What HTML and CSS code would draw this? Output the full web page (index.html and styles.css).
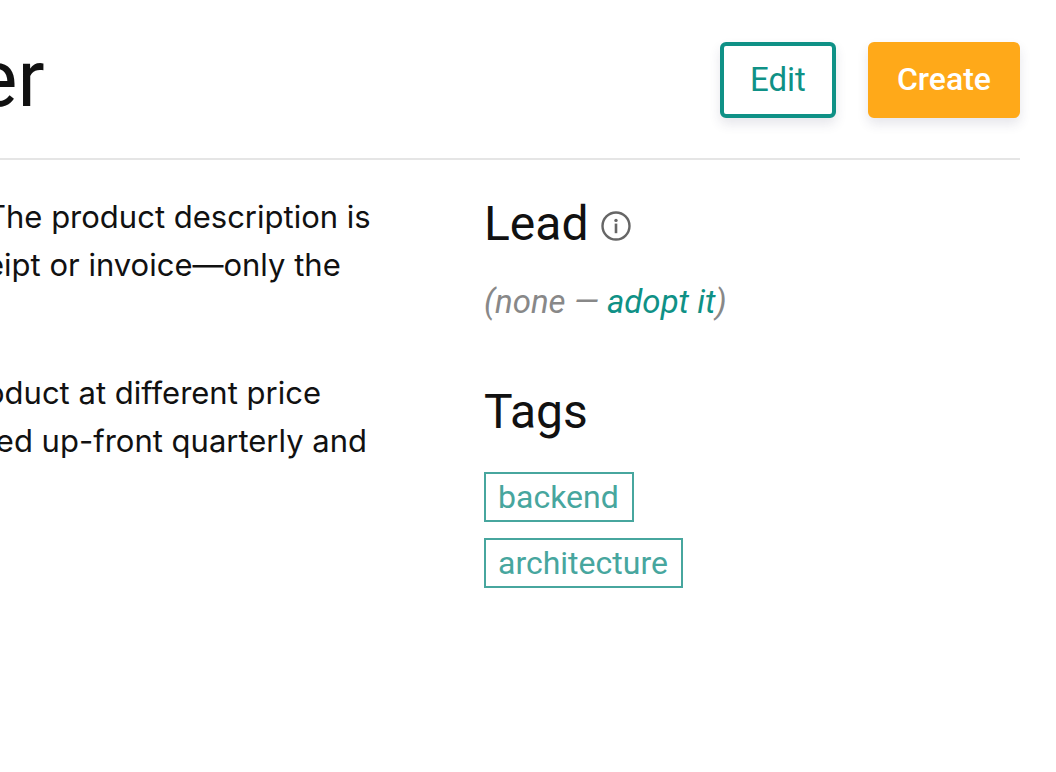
FILE: index.html
```html
<!DOCTYPE html>
<html lang="en">
<head>
  <meta charset="UTF-8">
  <title>Product</title>
  <link rel="stylesheet" href="styles.css">
</head>
<body>

<div class="page">
  <header class="page-header">
    <h1>er</h1>
    <div class="actions">
      <button type="button" class="btn btn-outline">Edit</button>
      <button type="button" class="btn btn-primary">Create</button>
    </div>
  </header>

  <div class="columns">
    <main class="description">
      <p>The product description is<br>eipt or invoice—only the</p>
      <p>oduct at different price<br>ted up-front quarterly and</p>
    </main>

    <aside class="sidebar">
      <section>
        <h2>Lead
          <svg class="info" viewBox="0 0 30 30" role="img" aria-label="Info">
            <circle cx="15" cy="15" r="13.5" fill="none" stroke="#666" stroke-width="2.4"/>
            <circle cx="15" cy="9.4" r="1.7" fill="#666"/>
            <rect x="13.7" y="12.6" width="2.6" height="9.6" fill="#666"/>
          </svg>
        </h2>
        <p class="lead">(none — <a href="#">adopt it</a>)</p>
      </section>
      <section>
        <h2>Tags</h2>
        <ul class="tags">
          <li><a href="#">backend</a></li>
          <li><a href="#">architecture</a></li>
        </ul>
      </section>
    </aside>
  </div>
</div>

</body>
</html>
```
FILE: styles.css
```css
* {
  box-sizing: border-box;
}
body {
  margin: 0;
  font-family: Roboto, sans-serif;
  font-size: 32px;
  line-height: 48px;
  color: #111;
  background: #fff;
  overflow-x: hidden;
}
.page {
  padding: 42px 36px 40px 0;
}
.page-header {
  display: flex;
  justify-content: space-between;
  align-items: flex-start;
  padding-bottom: 40px;
  border-bottom: 2px solid #e5e5e5;
}
h1, h2, p, ul {
  margin: 0;
  padding: 0;
}
h1 {
  margin-left: -25px;
  font-size: 80px;
  font-weight: 400;
  line-height: 74px;
}
.actions {
  display: flex;
  gap: 32px;
}
.btn {
  height: 76px;
  padding: 0 26px 2px;
  border: 4px solid;
  border-radius: 6px;
  font: 400 33px Roboto, sans-serif;
  box-shadow: 0 6px 12px rgba(50, 50, 93, 0.12);
  cursor: pointer;
}
.btn-outline {
  border-color: #0f9186;
  background: #fff;
  color: #0f9186;
}
.btn-primary {
  padding: 0 25px 2px;
  border-color: #ffa919;
  background: #ffa919;
  color: #fff;
  font-size: 32px;
  font-weight: 500;
}
.columns {
  display: grid;
  grid-template-columns: 484fr 536fr;
  padding-top: 32px;
}
.description {
  margin-left: -14px;
  padding-top: 1px;
  font-family: Inter, sans-serif;
  font-size: 31px;
  white-space: nowrap;
}
.description p + p {
  margin-top: 80px;
}
h2 {
  font-size: 48px;
  font-weight: 400;
  line-height: 64px;
}
.info {
  width: 30px;
  height: 30px;
  margin-left: 1px;
  vertical-align: -1px;
}
.lead {
  margin-top: 22px;
  color: #888;
  font-size: 33px;
  font-style: italic;
}
.lead a {
  color: #0f9186;
  text-decoration: none;
}
.sidebar section + section {
  margin-top: 54px;
}
.tags {
  display: flex;
  flex-direction: column;
  align-items: flex-start;
  gap: 16px;
  margin-top: 28px;
  list-style: none;
}
.tags a {
  display: block;
  padding: 0 13px 0 12px;
  border: 2px solid #47a69e;
  line-height: 46px;
  color: #47a69e;
  text-decoration: none;
}
```
